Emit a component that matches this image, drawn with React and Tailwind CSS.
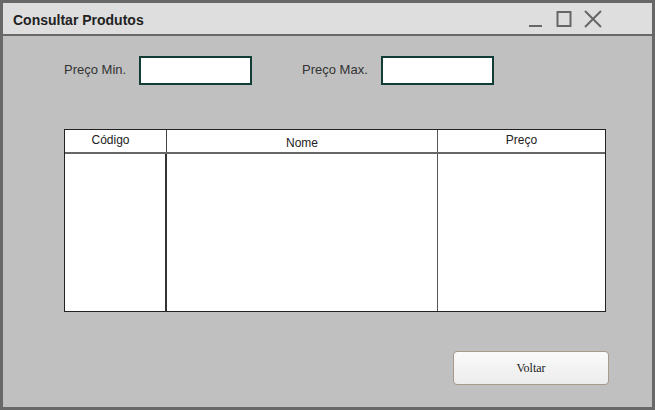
export default function App() {
  return (
    <div className="w-[655px] h-[410px] bg-[#c0c0c0] border-[3px] border-[#686868] flex flex-col" style={{ fontFamily: '"Liberation Sans", Arial, sans-serif' }}>
      <div className="h-[33px] bg-[#dedede] border-b-2 border-[#686868] flex items-center pl-[10px] pr-[50px] shrink-0">
        <span className="text-[14px] font-bold text-[#222] leading-none mt-[3px]">Consultar Produtos</span>
        <div className="ml-auto flex items-center gap-[12px] mt-[1px]">
          <svg width="16" height="18" viewBox="0 0 16 18"><line x1="1" y1="16" x2="14" y2="16" stroke="#666" strokeWidth="2" /></svg>
          <svg width="16" height="18" viewBox="0 0 16 18"><rect x="1.5" y="2" width="13" height="14" fill="none" stroke="#666" strokeWidth="2" /></svg>
          <svg width="18" height="18" viewBox="0 0 18 18"><path d="M1 1 L17 17 M17 1 L1 17" stroke="#666" strokeWidth="2" /></svg>
        </div>
      </div>
      <div className="flex-1 flex flex-col pl-[61px] pr-[44px]">
        <div className="flex items-center mt-[20px] h-[28px]">
          <span className="text-[13px] text-[#333] w-[75px]">Preço Min.</span>
          <div className="w-[113px] h-[29px] bg-white border-2 border-[#123c36]" />
          <span className="text-[13px] text-[#333] ml-[50px] w-[79px]">Preço Max.</span>
          <div className="w-[113px] h-[29px] bg-white border-2 border-[#123c36]" />
        </div>
        <div className="mt-[45px] w-[542px] h-[183px] bg-white border border-[#222] flex flex-col">
          <div className="h-[24px] flex border-b-2 border-[#666] text-[12px] text-[#222]">
            <div className="w-[102px] border-r border-[#444] flex justify-center pt-[1px] pr-[10px]">Código</div>
            <div className="w-[271px] border-r border-[#555] flex justify-center pt-[4px]">Nome</div>
            <div className="flex-1 flex justify-center pt-[1px]">Preço</div>
          </div>
          <div className="flex-1 flex">
            <div className="w-[102px] border-r-2 border-[#333]" />
            <div className="w-[271px] border-r border-[#555]" />
            <div className="flex-1" />
          </div>
        </div>
        <div className="flex justify-end mt-[39px] -mr-[1px]">
          <div className="w-[156px] h-[34px] rounded-[4px] border border-[#a8998a] bg-gradient-to-b from-[#fafafa] to-[#ececec] flex items-center justify-center text-[12px] text-[#222]" style={{ fontFamily: '"Liberation Serif", "Times New Roman", serif' }}>
            Voltar
          </div>
        </div>
      </div>
    </div>
  );
}
